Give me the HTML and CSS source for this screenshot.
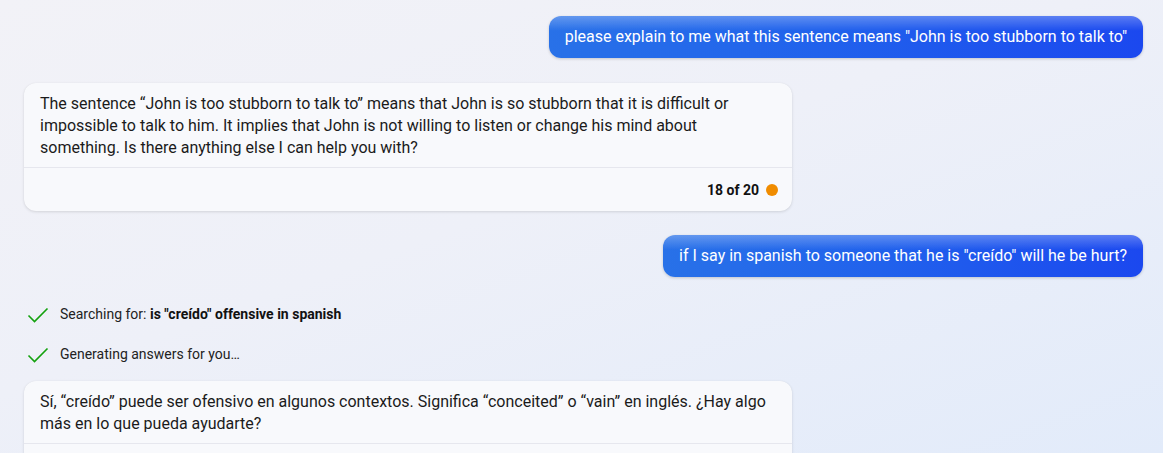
FILE: index.html
```html
<!DOCTYPE html>
<html lang="en">
<head>
  <meta charset="UTF-8">
  <title>Chat</title>
  <link rel="stylesheet" href="styles.css">
</head>
<body>
  <div class="chat">
    <div class="user-msg">please explain to me what this sentence means "John is too stubborn to talk to"</div>

    <div class="bot-card">
      <div class="bot-text">The sentence “John is too stubborn to talk to” means that John is so stubborn that it is difficult or impossible to talk to him. It implies that John is not willing to listen or change his mind about something. Is there anything else I can help you with?</div>
      <div class="bot-footer">
        <span class="count">18 of 20</span>
        <span class="dot"></span>
      </div>
    </div>

    <div class="user-msg second">if I say in spanish to someone that he is "creído" will he be hurt?</div>

    <div class="steps">
      <div class="step">
        <svg class="check" width="22" height="17" viewBox="0 0 22 17"><path d="M1.5 8.5 L7.5 14.5 L20.5 1.5" fill="none" stroke="#13a10e" stroke-width="1.6"/></svg>
        <span>Searching for: <b>is "creído" offensive in spanish</b></span>
      </div>
      <div class="step">
        <svg class="check" width="22" height="17" viewBox="0 0 22 17"><path d="M1.5 8.5 L7.5 14.5 L20.5 1.5" fill="none" stroke="#13a10e" stroke-width="1.6"/></svg>
        <span>Generating answers for you…</span>
      </div>
    </div>

    <div class="bot-card">
      <div class="bot-text">Sí, “creído” puede ser ofensivo en algunos contextos. Significa “conceited” o “vain” en inglés. ¿Hay algo más en lo que pueda ayudarte?</div>
      <div class="bot-footer"></div>
    </div>
  </div>
</body>
</html>
```

FILE: styles.css
```css
html, body {
  height: 100%;
}
body {
  margin: 0;
  font-family: Roboto, "Liberation Sans", sans-serif;
  color: #1b1b1b;
  background: linear-gradient(160deg, #f2f2f7 0%, #eef0f8 45%, #e2ebfa 100%);
  overflow: hidden;
}
.chat {
  display: flex;
  flex-direction: column;
  align-items: flex-start;
  padding: 16px 20px 0 24px;
}
.user-msg {
  align-self: flex-end;
  font-size: 16px;
  line-height: 22px;
  color: #fff;
  padding: 10px 16px;
  border-radius: 12px;
  background:
    linear-gradient(180deg, rgba(255,255,255,0.28) 0%, rgba(255,255,255,0) 35%),
    linear-gradient(90deg, #2871e8 0%, #2162ec 45%, #1b48ef 100%);
  box-shadow: 0 1px 3px rgba(0, 0, 0, 0.18);
  margin-bottom: 25px;
}
.user-msg.second {
  margin-bottom: 26px;
}
.bot-card {
  width: 768px;
  background: #f8f9fc;
  border-radius: 12px;
  box-shadow: 0 1px 3px rgba(0, 0, 0, 0.12), 0 0 1px rgba(0, 0, 0, 0.06);
  margin-bottom: 24px;
}
.bot-text {
  font-size: 16px;
  line-height: 22px;
  padding: 10px 16px 8px 16px;
  border-bottom: 1px solid #e6e7ee;
}
.bot-footer {
  display: flex;
  justify-content: flex-end;
  align-items: center;
  gap: 7px;
  height: 43px;
  padding-right: 14px;
}
.count {
  font-size: 14px;
  font-weight: bold;
  color: #111;
}
.dot {
  width: 12px;
  height: 12px;
  border-radius: 50%;
  background: #f08c00;
}
.steps {
  display: flex;
  flex-direction: column;
  gap: 18px;
  margin-bottom: 16px;
}
.step {
  display: flex;
  align-items: center;
  gap: 11px;
  height: 22px;
  font-size: 14px;
  color: #222;
  padding-left: 3px;
}
.step b {
  font-weight: bold;
  color: #111;
}
.check {
  margin-top: 3px;
}
```
